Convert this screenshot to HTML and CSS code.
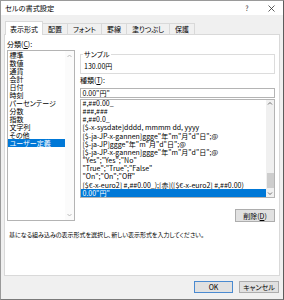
FILE: index.html
```html
<!DOCTYPE html>
<html lang="ja">
<head>
<meta charset="utf-8">
<title>セルの書式設定</title>
<link rel="stylesheet" href="styles.css">
</head>
<body>
<div class="dialog">
  <div class="titlebar">
    <span class="title">セルの書式設定</span>
    <span class="tb-btn help">?</span>
    <span class="tb-btn close">
      <svg width="7" height="7" viewBox="0 0 7 7"><path d="M0.5 0.5 L6.5 6.5 M6.5 0.5 L0.5 6.5" stroke="#333" stroke-width="0.8" fill="none"/></svg>
    </span>
  </div>
  <div class="tabs">
    <div class="tab active">表示形式</div>
    <div class="tab">配置</div>
    <div class="tab">フォント</div>
    <div class="tab">罫線</div>
    <div class="tab">塗りつぶし</div>
    <div class="tab">保護</div>
  </div>
  <div class="panel">
    <div class="cols">
      <div class="left">
        <div class="label">分類(<u>C</u>):</div>
        <div class="listbox cat">
          <div class="items">
            <div class="item">標準</div>
            <div class="item">数値</div>
            <div class="item">通貨</div>
            <div class="item">会計</div>
            <div class="item">日付</div>
            <div class="item">時刻</div>
            <div class="item">パーセンテージ</div>
            <div class="item">分数</div>
            <div class="item">指数</div>
            <div class="item">文字列</div>
            <div class="item">その他</div>
            <div class="item selected">ユーザー定義</div>
          </div>
          <div class="vscroll disabled">
            <svg class="arrow" width="7" height="6" viewBox="0 0 7 6"><path d="M1.5 4 L3.5 2 L5.5 4" stroke="#b4b4b4" stroke-width="0.9" fill="none"/></svg>
            <svg class="arrow" width="7" height="6" viewBox="0 0 7 6"><path d="M1.5 2 L3.5 4 L5.5 2" stroke="#b4b4b4" stroke-width="0.9" fill="none"/></svg>
          </div>
        </div>
      </div>
      <div class="right">
        <fieldset class="sample">
          <legend>サンプル</legend>
          <div class="sample-value">130.00円</div>
        </fieldset>
        <div class="label type-label">種類(<u>T</u>):</div>
        <div class="input">0.00"円"</div>
        <div class="listbox fmt">
          <div class="items">
            <div class="item">#,##0.00_</div>
            <div class="item">###,###</div>
            <div class="item">#,##0.0_</div>
            <div class="item">[$-x-sysdate]dddd, mmmm dd, yyyy</div>
            <div class="item">[$-ja-JP-x-gannen]ggge"年"m"月"d"日";@</div>
            <div class="item">[$-ja-JP]ggge"年"m"月"d"日";@</div>
            <div class="item">[$-ja-JP-x-gannen]ggge"年"m"月"d"日";@</div>
            <div class="item">"Yes";"Yes";"No"</div>
            <div class="item">"True";"True";"False"</div>
            <div class="item">"On";"On";"Off"</div>
            <div class="item">[$€-x-euro2] #,##0.00_);[赤]([$€-x-euro2] #,##0.00)</div>
            <div class="item selected">0.00"円"</div>
          </div>
          <div class="vscroll">
            <svg class="arrow" width="8" height="7" viewBox="0 0 8 7"><path d="M2 4.5 L4 2.5 L6 4.5" stroke="#606060" stroke-width="0.9" fill="none"/></svg>
            <div class="track"><div class="thumb"></div></div>
            <svg class="arrow" width="8" height="7" viewBox="0 0 8 7"><path d="M2 2.5 L4 4.5 L6 2.5" stroke="#606060" stroke-width="0.9" fill="none"/></svg>
          </div>
        </div>
        <div class="del-row"><button class="btn">削除(<u>D</u>)</button></div>
      </div>
    </div>
    <p class="hint">基になる組み込みの表示形式を選択し、新しい表示形式を入力してください。</p>
  </div>
  <div class="footer">
    <button class="btn ok">OK</button>
    <button class="btn cancel">キャンセル</button>
  </div>
</div>
</body>
</html>
```
FILE: styles.css
```css
* {
  box-sizing: border-box;
  margin: 0;
  padding: 0;
}

html, body {
  width: 284px;
  height: 300px;
  overflow: hidden;
}

body {
  font-family: "Noto Sans CJK JP", "Noto Sans", sans-serif;
  font-size: 7px;
  line-height: 8px;
  color: #000;
  background: #f0f0f0;
  font-feature-settings: "palt" 1;
}

.dialog {
  width: 284px;
  height: 300px;
  border: 1px solid #9a9a9a;
  border-right-color: #5c5c5c;
  border-bottom-color: #7a7a7a;
  display: flex;
  flex-direction: column;
}

/* title bar */
.titlebar {
  height: 14px;
  background: #fff;
  display: flex;
  align-items: center;
  padding-left: 4px;
}

.title {
  font-size: 7.2px;
  flex: 1;
}

.tb-btn {
  width: 24px;
  height: 14px;
  display: flex;
  align-items: center;
  justify-content: center;
  color: #333;
  font-size: 7px;
}

/* tabs */
.tabs {
  display: flex;
  align-items: flex-end;
  height: 13px;
  margin-top: 6px;
  padding-left: 4px;
}

.tab {
  height: 11px;
  line-height: 10px;
  padding: 0 5px;
  border: 1px solid #d9d9d9;
  border-left: none;
  border-bottom: none;
  background: #f0f0f0;
}

.tab.active {
  position: relative;
  z-index: 1;
  height: 14px;
  margin-bottom: -1px;
  padding: 2px 4px 0;
  border-left: 1px solid #d9d9d9;
  background: #fff;
}

/* main panel */
.panel {
  height: 242px;
  margin: 0 3px;
  background: #fff;
  border: 1px solid #d9d9d9;
  padding: 5px 4px 0 2px;
}

.cols {
  display: flex;
  gap: 5px;
}

.left {
  width: 68px;
}

.right {
  width: 195px;
  padding-top: 10px;
}

.label {
  height: 8px;
  margin-bottom: 2px;
}

.listbox {
  display: flex;
  border: 1px solid #b4b4b4;
  background: #fff;
  overflow: hidden;
}

.listbox .items {
  flex: 1;
  display: flex;
  flex-direction: column;
  min-width: 0;
}

.item {
  white-space: nowrap;
  padding-left: 1.5px;
  height: 8px;
  flex: none;
}

.item.selected {
  background: #0078d7;
  color: #fff;
}

.cat {
  height: 171px;
}

.vscroll {
  width: 9px;
  display: flex;
  flex-direction: column;
  justify-content: space-between;
  align-items: center;
  background: #f0f0f0;
}

.vscroll.disabled {
  background: #fbfbfb;
  padding: 2px 0;
}

/* sample group */
.sample {
  border: 1px solid #dcdcdc;
  height: 24px;
  padding: 0 3px;
}

.sample legend {
  padding: 0 1px;
  margin-left: -1px;
  line-height: 8px;
}

.sample-value {
  padding-top: 4px;
}

.type-label {
  margin-top: 2px;
  margin-bottom: 4px;
}

.input {
  height: 10px;
  border: 1px solid #b4b4b4;
  padding-left: 1.5px;
  line-height: 8px;
}

.fmt {
  height: 99px;
  margin-top: 1px;
}

.fmt .items {
  justify-content: flex-end;
}

.fmt .item {
  height: 8.2px;
  line-height: 8.2px;
}

.fmt .vscroll {
  width: 8px;
}

.fmt .arrow {
  flex: none;
}

.track {
  flex: 1;
  width: 100%;
  display: flex;
  flex-direction: column;
  justify-content: flex-end;
  padding-bottom: 2px;
}

.thumb {
  height: 15px;
  background: #cdcdcd;
  margin: 0 0.5px;
}

.del-row {
  display: flex;
  justify-content: flex-end;
  margin-top: 11px;
}

.btn {
  font-family: inherit;
  font-size: 7px;
  line-height: 8px;
  font-feature-settings: "palt" 1;
  color: #000;
  background: #e1e1e1;
  border: 1px solid #adadad;
  height: 13px;
  width: 40px;
}

.hint {
  margin-top: 9px;
  margin-left: 2px;
  font-size: 6px;
  line-height: 8px;
  white-space: nowrap;
}

/* footer */
.footer {
  display: flex;
  justify-content: flex-end;
  gap: 6px;
  padding: 5px 4px 0 0;
}

.footer .btn {
  height: 12px;
}

.ok {
  width: 39px;
  border-color: #4a8ad0;
}
```
